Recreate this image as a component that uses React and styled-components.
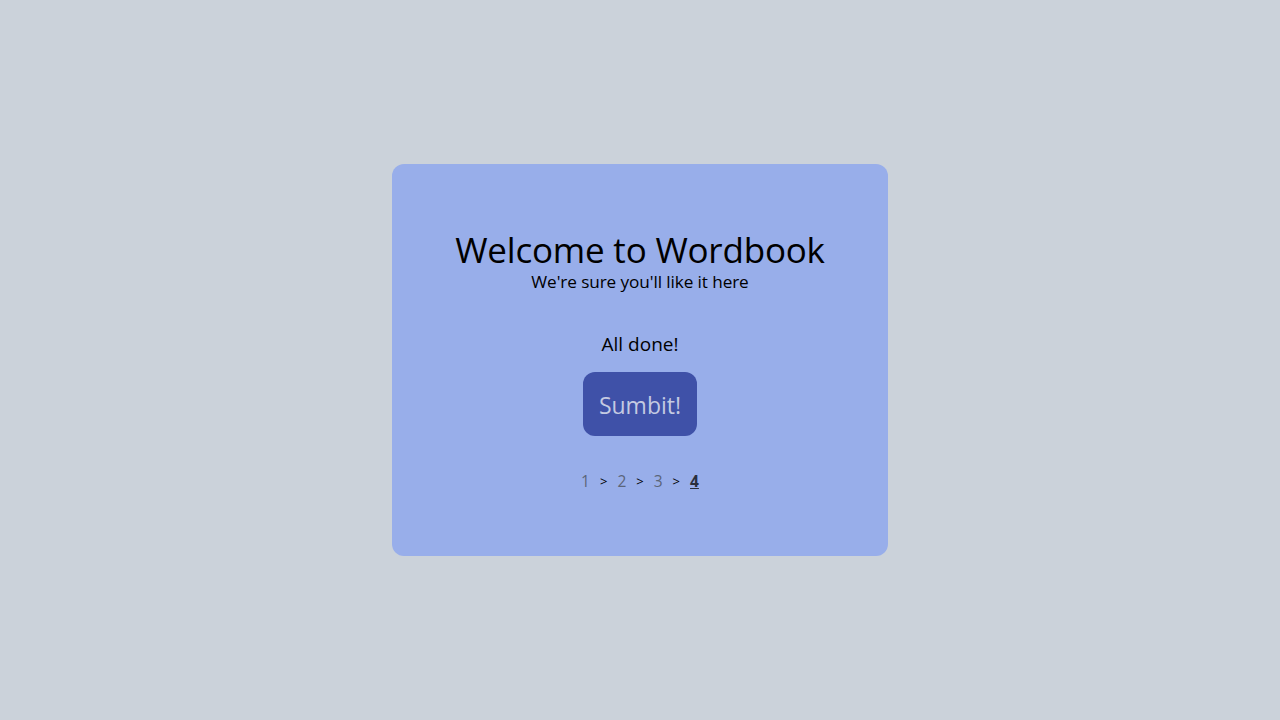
import React from 'react'
import styled, { createGlobalStyle } from 'styled-components'

const GlobalStyle = createGlobalStyle`
  html, body {
    margin: 0;
    height: 100%;
  }
  body {
    background: #cbd2da;
    font-family: 'Open Sans', 'Noto Sans', sans-serif;
  }
  #root {
    height: 100%;
  }
`

const Page = styled.main`
  height: 100vh;
  display: flex;
  align-items: center;
  justify-content: center;
`

const Card = styled.section`
  width: 496px;
  height: 392px;
  box-sizing: border-box;
  background: #98aeea;
  border-radius: 12px;
  padding-top: 64px;
  display: flex;
  flex-direction: column;
  align-items: center;
  color: #000;
`

const Title = styled.h1`
  margin: 0;
  font-size: 35px;
  font-weight: 400;
  line-height: 44px;
  letter-spacing: -0.2px;
`

const Subtitle = styled.p`
  margin: 0;
  font-size: 17.2px;
  line-height: 20px;
  letter-spacing: -0.1px;
`

const Status = styled.p`
  margin: 40px 0 0;
  font-size: 19px;
  line-height: 24px;
`

const SubmitButton = styled.button`
  margin-top: 16px;
  width: 114px;
  height: 64px;
  border: none;
  border-radius: 12px;
  background: #3f51a8;
  color: #c4cae2;
  font-family: inherit;
  font-size: 23px;
  padding-top: 2px;
  cursor: pointer;
`

const Steps = styled.nav`
  margin-top: 35px;
  display: flex;
  align-items: center;
  gap: 10px;
  font-size: 15.5px;
  line-height: 20px;
`

const Step = styled.span`
  color: ${p => (p.$active ? '#2a2f3c' : '#5b6579')};
  font-weight: ${p => (p.$active ? 700 : 400)};
  text-decoration: ${p => (p.$active ? 'underline' : 'none')};
`

const Arrow = styled.span`
  color: #000;
  font-size: 13px;
`

export default function App() {
  const steps = [1, 2, 3, 4]
  const current = 4
  return (
    <>
      <GlobalStyle />
      <Page>
        <Card>
          <Title>Welcome to Wordbook</Title>
          <Subtitle>We're sure you'll like it here</Subtitle>
          <Status>All done!</Status>
          <SubmitButton>Sumbit!</SubmitButton>
          <Steps>
            {steps.map((s, i) => (
              <React.Fragment key={s}>
                {i > 0 && <Arrow>&gt;</Arrow>}
                <Step $active={s === current}>{s}</Step>
              </React.Fragment>
            ))}
          </Steps>
        </Card>
      </Page>
    </>
  )
}
